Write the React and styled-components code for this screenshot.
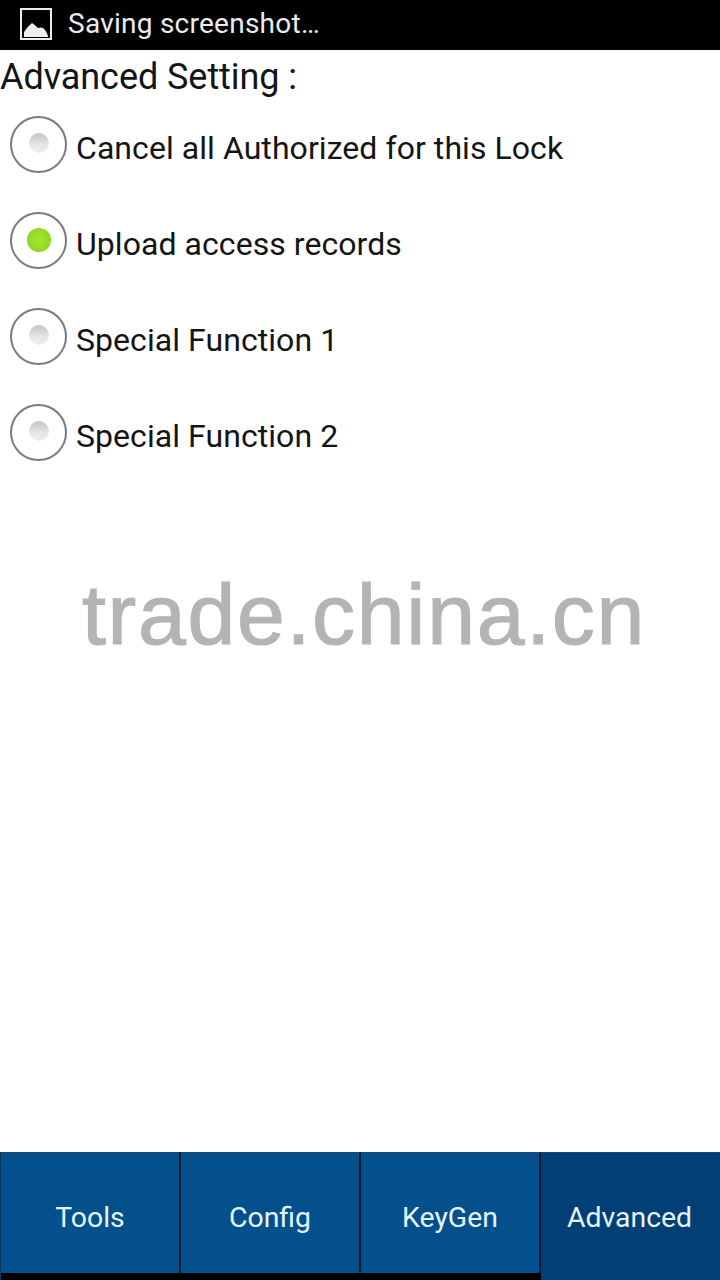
import React from "react";
import styled, { createGlobalStyle } from "styled-components";

const Global = createGlobalStyle`
  html, body { margin: 0; padding: 0; background: #fff; }
  #root { width: 720px; height: 1280px; }
  * { box-sizing: border-box; }
`;

const Screen = styled.div`
  position: relative;
  width: 720px;
  height: 1280px;
  display: flex;
  flex-direction: column;
  background: #fff;
  font-family: Roboto, "Liberation Sans", sans-serif;
  overflow: hidden;
`;

const StatusBar = styled.div`
  height: 50px;
  flex: none;
  background: #000;
  display: flex;
  align-items: center;
  padding: 0 0 3px 20px;
  gap: 16px;
  color: #ececec;
  font-size: 28px;
`;

const StatusText = styled.span`
  letter-spacing: 0.25px;
`;

const Title = styled.div`
  height: 54px;
  flex: none;
  display: flex;
  align-items: center;
  font-size: 36px;
  letter-spacing: -0.06px;
  color: #141414;
`;

const Options = styled.div`
  flex: 1;
  margin-top: -4px;
  display: flex;
  flex-direction: column;
`;

const Option = styled.div`
  height: 96px;
  flex: none;
  display: flex;
  align-items: center;
  padding-left: 10px;
  gap: 9px;
  font-size: 32px;
  letter-spacing: 0.06px;
  color: #141414;
`;

const Ring = styled.div`
  width: 57px;
  height: 57px;
  margin-bottom: 8px;
  border-radius: 50%;
  border: 2.5px solid #7c7c7c;
  background: #fff;
  display: flex;
  align-items: center;
  justify-content: center;
  padding-bottom: ${(p) => (p.$on ? 0 : 2)}px;
  flex: none;
`;

const Dot = styled.div`
  width: ${(p) => (p.$on ? 24 : 20)}px;
  height: ${(p) => (p.$on ? 24 : 20)}px;
  border-radius: 50%;
  background: ${(p) =>
    p.$on
      ? "radial-gradient(circle at 50% 50%, #a4e82a 0%, #90d824 65%, #7aa83c 100%)"
      : "linear-gradient(#c4c4c4, #e6e6e6 60%, #eeeeee)"};
`;

const Watermark = styled.div`
  position: absolute;
  left: 82px;
  top: 564px;
  font-family: "Liberation Sans", Arial, sans-serif;
  font-size: 86px;
  line-height: 100px;
  color: #b4b4b4;
  letter-spacing: 1.7px;
  -webkit-text-stroke: 1.2px #b4b4b4;
  white-space: nowrap;
`;

const TabBar = styled.div`
  height: 128px;
  flex: none;
  display: flex;
  padding-left: 1px;
  background: linear-gradient(90deg, #0c3a62 1px, #000 1px);
`;

const Tab = styled.div`
  flex: ${(p) => (p.$active ? "1" : "0 0 180px")};
  height: ${(p) => (p.$active ? 128 : 121)}px;
  padding: ${(p) => (p.$active ? "1px 2px 0 0" : "8px 0 0")};
  display: flex;
  align-items: center;
  justify-content: center;
  font-size: 28.4px;
  color: #e4f6fb;
  background: ${(p) => (p.$active ? "#023f76" : "#04508c")};
  border-top: 1px solid #1f4a70;
  border-right: ${(p) => (p.$active ? "none" : "2px solid #031a33")};
`;

const options = [
  ["Cancel all Authorized for this Lock", false],
  ["Upload access records", true],
  ["Special Function 1", false],
  ["Special Function 2", false],
];

const tabs = ["Tools", "Config", "KeyGen", "Advanced"];

export default function App() {
  return (
    <Screen>
      <Global />
      <StatusBar>
        <svg width="32" height="32" viewBox="0 0 32 32">
          <rect x="1" y="1" width="30" height="30" fill="#000" stroke="#eee" strokeWidth="2" />
          <path d="M4 29 V24 Q8 18 12 15 Q15 17 18 20 Q21 19 23 20 Q26 22 28 28 V29 Z" fill="#eee" />
        </svg>
        <StatusText>Saving screenshot…</StatusText>
      </StatusBar>
      <Title>Advanced Setting :</Title>
      <Options>
        {options.map(([label, on]) => (
          <Option key={label}>
            <Ring $on={on}>
              <Dot $on={on} />
            </Ring>
            <span>{label}</span>
          </Option>
        ))}
      </Options>
      <Watermark>trade.china.cn</Watermark>
      <TabBar>
        {tabs.map((t) => (
          <Tab key={t} $active={t === "Advanced"}>
            {t}
          </Tab>
        ))}
      </TabBar>
    </Screen>
  );
}
